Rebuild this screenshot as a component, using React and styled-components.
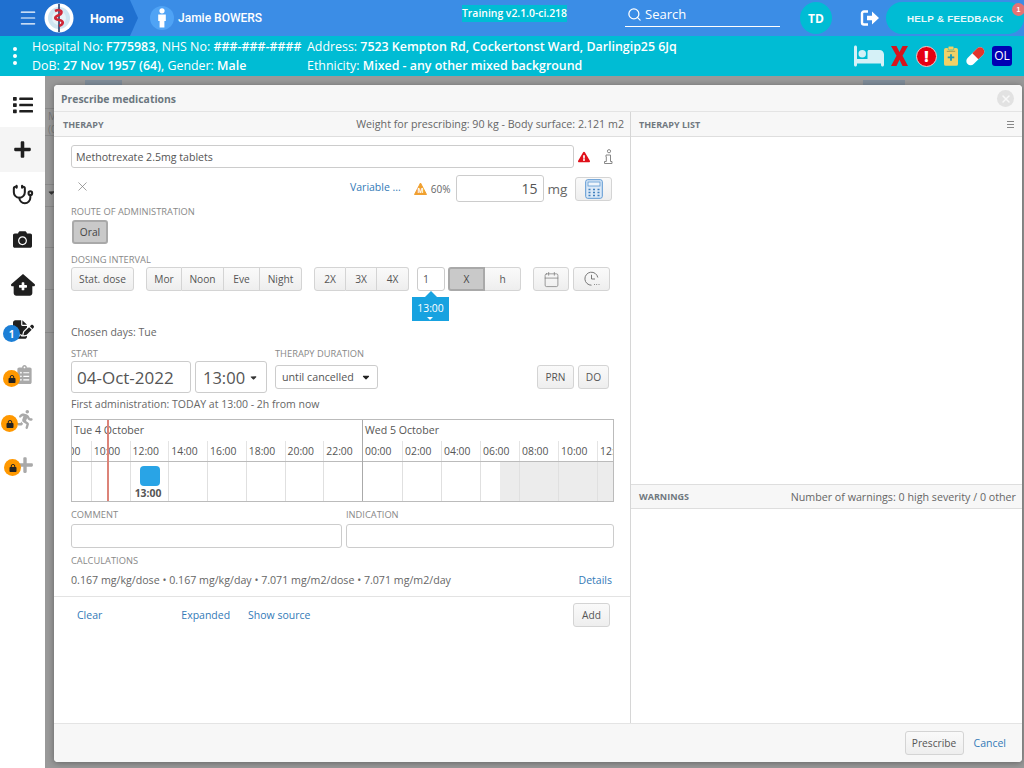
import React from 'react';
import styled, { createGlobalStyle } from 'styled-components';
import { FaPersonRunning, FaLock, FaBed, FaCaretDown, FaHouseMedical, FaFileSignature } from 'react-icons/fa6';
import { FaClipboardList, FaExclamationTriangle, FaList, FaPlus, FaCamera } from 'react-icons/fa';
import { Stethoscope, Search as SearchIcon, X as XIcon, Calendar, Menu } from 'lucide-react';

const Global = createGlobalStyle`
  html, body { margin: 0; padding: 0; background: #fff; }
  * { box-sizing: border-box; }
  body { font-family: "Open Sans", "Liberation Sans", sans-serif; color: #555; }
`;

const Page = styled.div`
  width: 1024px; height: 768px; overflow: hidden; display: flex; flex-direction: column;
`;
const Header = styled.header`
  height: 36px; background: #3b8de6; display: flex; align-items: center; color: #fff;
  font-family: Roboto, "Liberation Sans", sans-serif; flex: none;
`;
const HomeCrumb = styled.div`
  width: 138px; height: 36px; background: #1f70d0; display: flex; align-items: center;
  clip-path: polygon(0 0, 130px 0, 138px 18px, 130px 36px, 0 36px); flex: none; padding-left: 18px;
`;
const HomeText = styled.span`
  font-size: 12.5px; font-weight: 700; margin-left: 16px;
`;
const Logo = styled.svg`
  width: 30px; height: 30px; margin-left: 6px; flex: none;
`;
const PersonCircle = styled.div`
  width: 24px; height: 24px; border-radius: 50%; background: #4fa3f5; margin-left: 12px;
  display: flex; align-items: center; justify-content: center; flex: none;
`;
const PersonName = styled.span`
  font-size: 12px; font-weight: 500; margin-left: 4px; width: 262px; flex: none;
`;
const TrainingBadge = styled.div`
  width: 105px; height: 17px; background: #00bcd4; font-size: 10.4px; font-family: "Open Sans", sans-serif; font-weight: 600;
  line-height: 17px; text-align: center; margin-top: -9px; margin-left: 22px; flex: none; white-space: nowrap;
`;
const SearchBox = styled.div`
  width: 155px; height: 24px; margin-left: 58px; margin-top: -6px; border-bottom: 1px solid #fff; display: flex; align-items: center;
  gap: 3px; padding-bottom: 1px; font-size: 13px; flex: none; font-family: "Open Sans", sans-serif; padding-left: 2px;
`;
const UserCircle = styled.div`
  width: 32px; height: 32px; border-radius: 50%; background: #00bcd4; font-size: 12px; font-weight: 700; margin-left: 20px;
  display: flex; align-items: center; justify-content: center; flex: none; font-family: "Open Sans", sans-serif;
`;
const LogoutWrap = styled.div`
  margin-left: 28px; display: flex; flex: none;
`;
const HelpPill = styled.div`
  position: relative; width: 138px; height: 32px; border-radius: 16px; background: #00bcd4; margin-left: 6px; flex: none;
  font-size: 9.8px; font-weight: 700; font-family: "Liberation Sans", sans-serif; letter-spacing: .25px; color: #e6f8fb;
  display: flex; align-items: center; padding-left: 21px;
`;
const HelpBadge = styled.span`
  position: absolute; top: 1px; right: -1px; width: 13px; height: 13px; border-radius: 50%; background: #e57373;
  font-size: 7px; line-height: 13px; text-align: center; color: #fff;
`;

const PatientBar = styled.div`
  height: 40px; background: #00bcd4; color: #fff; display: flex; align-items: center; flex: none;
  font-size: 12.4px; line-height: 19px; position: relative; font-family: "Open Sans", sans-serif;
`;
const Dots = styled.div`
  width: 32px; display: flex; flex-direction: column; align-items: center; gap: 3px; flex: none; padding-right: 3px;
  & > i { width: 4px; height: 4px; border-radius: 50%; background: #fff; }
`;
const PatientCol = styled.div`
  width: ${p => p.$w}px; flex: none; white-space: nowrap;
  & b { font-weight: 600; }
`;
const AlertIcons = styled.div`
  display: flex; align-items: center; margin-left: auto; height: 30px; flex: none; padding-right: 12px;
`;
const AlertSlot = styled.div`
  margin-left: ${p => p.$ml}px; display: flex; align-items: center; justify-content: center; flex: none;
`;
const RedCircle = styled.div`
  width: 21px; height: 21px; border-radius: 50%; background: #e60012; border: 1px solid #f6c9c9; color: #fff;
  font-weight: 800; font-size: 15px; line-height: 18px; text-align: center;
`;
const OlBox = styled.div`
  width: 20px; height: 20px; border-radius: 3px; background: #0000b3; color: #fff; font-size: 12px; line-height: 20px; text-align: center;
`;

const Main = styled.div`
  flex: 1; display: flex; min-height: 0;
`;
const Sidebar = styled.nav`
  width: 45px; background: #fff; flex: none; padding-top: 6px; display: flex; flex-direction: column;
`;
const SideItem = styled.div`
  position: relative; height: 45px; display: flex; align-items: center; justify-content: center;
  background: ${p => p.$active ? '#f5f5f5' : 'transparent'};
  color: ${p => p.$off ? '#a9a9a9' : '#1f1f1f'}; padding-left: ${p => p.$pl || 0}px;
`;
const SideBadge = styled.span`
  position: absolute; left: ${p => p.$x}px; top: ${p => p.$y}px; width: 17px; height: 17px; border-radius: 50%;
  background: ${p => p.$blue ? '#1c7fd6' : '#ff9800'}; color: ${p => p.$blue ? '#fff' : '#222'};
  display: flex; align-items: center; justify-content: center; font-size: 10px; font-weight: 700;
`;

const Backdrop = styled.div`
  flex: 1; position: relative; background: #999; padding: 9px 2px 6px 9px; display: flex; min-width: 0;
`;
const GhostLine = styled.i`
  position: absolute; left: 0; width: 12px; top: ${p => p.$y}px; height: 1px; background: #888;
`;
const GhostTab = styled.i`
  position: absolute; left: ${p => p.$x}px; top: 4px; width: ${p => p.$w}px; height: 6px; background: #7f8c99;
`;
const GhostText = styled.span`
  position: absolute; left: 3px; top: ${p => p.$y}px; font-size: 10px; color: #777;
`;
const GhostCaret = styled.span`
  position: absolute; left: 2px; top: 112px; display: flex; color: #333;
`;
const Dialog = styled.section`
  position: relative; flex: 1; background: #fff; border-radius: 4px; display: flex; flex-direction: column;
  box-shadow: 0 1px 6px rgba(0,0,0,.35); overflow: hidden; min-width: 0;
`;
const TitleBar = styled.div`
  height: 27px; background: #f7f7f7; border-bottom: 1px solid #e4e4e4; display: flex; align-items: center; justify-content: space-between;
  padding: 1px 8px 0 7px; font-size: 10.4px; font-weight: 700; color: #6c7780; flex: none;
`;
const CloseDot = styled.div`
  width: 17px; height: 17px; border-radius: 50%; background: #e2e2e2; color: #f8f8f8; display: flex; align-items: center; justify-content: center;
`;
const Panes = styled.div`
  flex: 1; display: flex; min-height: 0;
`;
const LeftPane = styled.div`
  width: 577px; border-right: 1px solid #d6d6d6; flex: none; display: flex; flex-direction: column;
`;
const RightPane = styled.div`
  flex: 1; display: flex; flex-direction: column; min-width: 0;
`;
const PaneHead = styled.div`
  height: 25px; background: #f7f7f7; border-bottom: 1px solid #dedede; display: flex; align-items: center; justify-content: space-between;
  padding: 0 ${p => p.$pr || 6}px 0 ${p => p.$pl || 9}px; font-size: 10.7px; color: #666; flex: none;
  & > b { font-size: 9px; font-weight: 700; color: #70787f; }
`;
const ListSpace = styled.div`
  height: 347px; flex: none;
`;
const Burger = styled.div`
  width: 7px; height: 7px; border-top: 1px solid #888; border-bottom: 1px solid #888; position: relative;
  &::after { content: ''; position: absolute; left: 0; right: 0; top: 2px; height: 1px; background: #888; }
`;
const Body = styled.div`
  padding: 8px 16px 0 17px; flex: none; height: 459px;
`;
const Row = styled.div`
  display: flex; align-items: center; height: ${p => p.$h}px; margin-top: ${p => p.$mt || 0}px; position: relative;
`;
const FieldBox = styled.div`
  height: ${p => p.$h || 23}px; width: ${p => p.$w}px; background: #fff; border: 1px solid #ccc; border-radius: 3px; flex: none;
  font-size: ${p => p.$fs || 10.5}px; color: #555; display: flex; align-items: center; padding: 0 ${p => p.$px || 5}px;
  justify-content: ${p => p.$end ? 'flex-end' : 'flex-start'}; margin-left: ${p => p.$ml || 0}px; white-space: nowrap;
`;
const Caption = styled.div`
  font-size: 9.3px; line-height: 12px; color: #888; text-transform: uppercase; height: 12px; white-space: nowrap;
  margin-top: ${p => p.$mt || 0}px; margin-left: ${p => p.$ml || 0}px; width: ${p => p.$w ? p.$w + 'px' : 'auto'}; flex: none;
`;
const TextLink = styled.a`
  color: #337ab7; font-size: 10.5px; white-space: nowrap; margin-left: ${p => p.$auto ? 'auto' : (p.$ml || 0) + 'px'};
  margin-right: ${p => p.$mr || 0}px; margin-bottom: ${p => p.$mb || 0}px; flex: none;
`;
const Small = styled.span`
  font-size: ${p => p.$fs || 10.5}px; color: #666; white-space: nowrap; margin-left: ${p => p.$ml || 0}px;
  margin-bottom: ${p => p.$mb || 0}px; flex: none; display: inline-flex; align-items: center;
`;
const Btn = styled.div`
  height: ${p => p.$h || 24}px; width: ${p => p.$w}px; margin-left: ${p => p.$auto ? 'auto' : (p.$ml || 0) + 'px'}; flex: none; font-size: 10.2px; color: #555;
  display: flex; align-items: center; justify-content: center; border: 1px solid #d4d4d4; border-radius: 3px;
  background: linear-gradient(#fafafa, #eeeeee); white-space: nowrap;
`;
const PressedBtn = styled(Btn)`
  background: #c9c9c9; border: 2px solid #a9a9a9; border-radius: 3px; color: #444;
`;
const Group = styled.div`
  display: flex; margin-left: ${p => p.$ml || 0}px; flex: none;
  & > * { border-radius: 0; }
  & > * + * { border-left: none; }
  & > *:first-child { border-radius: 3px 0 0 3px; }
  & > *:last-child { border-radius: 0 3px 3px 0; }
`;
const Tip = styled.div`
  position: absolute; left: 341px; top: 30px; width: 37px; height: 24px; background: #17a2e0; color: #fff; font-size: 10.4px;
  text-align: center; line-height: 22px;
  &::before { content: ''; position: absolute; left: 13px; top: -6px; border: 6px solid transparent; border-top: 0; border-bottom-color: #17a2e0; }
  &::after { content: ''; position: absolute; left: 15px; bottom: 1px; border: 3px solid transparent; border-bottom: 0; border-top-color: #fff; }
`;
const Timeline = styled.div`
  position: relative; height: 83px; width: 543px; margin-top: 7px; border: 1px solid #bbb; overflow: hidden; background: #fff;
`;
const Track = styled.div`
  display: flex; width: 900px; height: 100%; margin-left: -20px;
`;
const Day = styled.div`
  flex: none; width: ${p => p.$w}px; display: flex; flex-direction: column; border-right: ${p => p.$end ? 'none' : '1px solid #aaa'};
`;
const DayTitle = styled.div`
  height: 21px; font-size: 10.6px; line-height: 20px; color: #555; padding-left: ${p => p.$pl}px; white-space: nowrap;
`;
const Hours = styled.div`
  height: 21px; display: flex; border-bottom: 1px solid #bbb;
`;
const Hour = styled.div`
  flex: 0 1 39px; min-width: 0; font-size: 10.4px; line-height: 20px; color: #555; padding-left: 2px;
  border-left: ${p => p.$first ? 'none' : '1px solid #e4e4e4'}; white-space: nowrap; overflow: hidden;
`;
const Slots = styled.div`
  flex: 1; display: flex;
`;
const Slot = styled.div`
  flex: 0 1 39px; min-width: 0; border-left: ${p => p.$first ? 'none' : '1px solid #e0e0e0'}; position: relative; background: ${p => p.$shade ? '#ececec' : '#fff'};
`;
const Half = styled.i`
  position: absolute; right: 0; top: 0; bottom: 0; width: 50%; background: #ececec;
`;
const Dose = styled.div`
  position: absolute; left: 9px; top: 4px; width: 20px; height: 20px; border-radius: 4px; background: #29a4e6;
`;
const DoseTime = styled.b`
  position: absolute; left: -2px; width: 39px; top: 24px; text-align: center; font-size: 10.4px; font-weight: 700; color: #555;
`;
const NowLine = styled.i`
  position: absolute; left: 35px; top: 0; bottom: 0; width: 2px; background: #dc8378;
`;
const ActionRow = styled.div`
  height: 37px; border-top: 1px solid #e3e3e3; margin: 8px -16px 0 -17px; padding: 0 20px 0 23px; display: flex; align-items: center; width: 576px;
`;
const Footer = styled.div`
  height: 39px; flex: none; background: #f7f7f7; border-top: 1px solid #e4e4e4; display: flex; align-items: center; justify-content: flex-end; padding-right: 16px;
`;
const WarnHead = styled(PaneHead)`
  border-top: 1px solid #dedede; height: 25px;
`;

const LogoArt = () => (
  <Logo viewBox="0 0 30 30">
    <circle cx="15" cy="15" r="14.5" fill="#fff" />
    <circle cx="15" cy="15" r="11" fill="#cfe6f2" />
    <circle cx="15" cy="15" r="7" fill="#e8f3f8" />
    <path d="M15 1v28" stroke="#27406b" strokeWidth="1.6" />
    <path d="M11 8c6-3 9 2 4 4s-5 4 0 5 5 4 0 6" stroke="#d02838" strokeWidth="2.6" fill="none" />
  </Logo>
);
const Person = () => (
  <svg width="10" height="20" viewBox="0 0 10 20" fill="#fff"><circle cx="5" cy="2.8" r="2.6" /><path d="M1.2 6.5h7.6v6.5H7.4v6.5H2.6V13H1.2z" /></svg>
);
const LogoutGlyph = () => (
  <svg width="20" height="20" viewBox="0 0 20 20"><path d="M8 3.500H4a2 2 0 0 0-2 2v9a2 2 0 0 0 2 2h4" fill="none" stroke="#fff" strokeWidth="2.400" /><path d="M7 7.700h5V3.500l7 6.500-7 6.500v-4.200H7z" fill="#fff" /></svg>
);
const BigX = () => (
  <svg width="17" height="20" viewBox="0 0 17 20"><path d="M0 0h5.5l3 6 3-6H17l-5.500 9.800L17 20h-5.500l-3-6.300-3 6.300H0l5.500-10.200z" fill="#d6141c" /></svg>
);
const Clipboard = () => (
  <svg width="14" height="22" viewBox="0 0 15 22"><rect x="0" y="2.5" width="15" height="19" rx="2" fill="#f2d166" /><rect x="4.5" y="0.5" width="6" height="4" rx="1" fill="#f2d166" stroke="#00bcd4" strokeWidth=".6" /><path d="M3 6h9" stroke="#8a8a50" strokeWidth=".8" /><path d="M7.5 9v7M4 12.5h7" stroke="#1e9bb8" strokeWidth="2" /></svg>
);
const Pill = () => (
  <svg width="20" height="20" viewBox="0 0 21 21"><g transform="rotate(-45 10.5 10.5)"><rect x="-1" y="6.5" width="23" height="9" rx="4.5" fill="#fff" /><path d="M10.5 6.5h7a4.5 4.500 0 0 1 0 9h-7z" fill="#e2342c" /></g></svg>
);
const WarnM = () => (
  <svg width="13" height="13" viewBox="0 0 13 13"><path d="M6.5 1 12.500 12.500H.5z" fill="#f0a030" stroke="#f0a030" strokeLinejoin="round" /><text x="6.5" y="11" fontSize="6.5" fontFamily="Open Sans" fontWeight="700" textAnchor="middle" fill="#fff">M</text></svg>
);
const InfoGlyph = () => (
  <svg width="10" height="16" viewBox="0 0 10 16" fill="none" stroke="#888" strokeWidth="1"><circle cx="6" cy="2.200" r="1.600" /><path d="M3 6h4.500v6.500h1.500v2H1.500v-2h1.800V8H3z" /></svg>
);
const Calc = () => (
  <svg width="18" height="20" viewBox="0 0 18 20" fill="none"><rect x=".7" y=".7" width="16.600" height="18.600" rx="2" fill="#dbe9f7" stroke="#5b97d2" /><rect x="3" y="3" width="12" height="4" fill="#eef5fb" stroke="#5b97d2" strokeWidth=".8" /><path d="M3.500 10.500h2m2.500 0h2m2.500 0h2M3.500 13.500h2m2.500 0h2m2.500 0h2M3.500 16.500h2m2.500 0h2m2.500 0h2" stroke="#3f7fbd" strokeWidth="1.300" /></svg>
);
const ClockDots = () => (
  <svg width="16" height="16" viewBox="0 0 16 16" fill="none" stroke="#777" strokeWidth="1"><path d="M13.800 6.500A6.500 6.500 0 1 0 7.500 14.200" /><path d="M7.500 3.800v4.200h3.500" /><path d="M10 13.500h.8m1.500 0h.8m1.500 0h.8" strokeWidth="1.200" /></svg>
);

const firstHours = ['08:00','10:00','12:00','14:00','16:00','18:00','20:00','22:00'];
const secondHours = ['00:00','02:00','04:00','06:00','08:00','10:00','12:00'];

export default function App() {
  return (
    <Page>
      <Global />
      <Header>
        <HomeCrumb>
          <Menu size={20} strokeWidth={1.4} color="#fff" />
          <LogoArt />
          <HomeText>Home</HomeText>
        </HomeCrumb>
        <PersonCircle><Person /></PersonCircle>
        <PersonName>Jamie BOWERS</PersonName>
        <TrainingBadge>Training v2.1.0-ci.218</TrainingBadge>
        <SearchBox><SearchIcon size={15} strokeWidth={2} color="#fff" />Search</SearchBox>
        <UserCircle>TD</UserCircle>
        <LogoutWrap><LogoutGlyph /></LogoutWrap>
        <HelpPill>HELP &amp; FEEDBACK<HelpBadge>1</HelpBadge></HelpPill>
      </Header>
      <PatientBar>
        <Dots><i /><i /><i /></Dots>
        <PatientCol $w={275}>
          Hospital No: <b>F775983</b>, NHS No: <b>###-###-####</b><br />
          DoB: <b>27 Nov 1957 (64)</b>, Gender: <b>Male</b>
        </PatientCol>
        <PatientCol $w={400}>
          Address: <b>7523 Kempton Rd, Cockertonst Ward, Darlingip25 6Jq</b><br />
          Ethnicity: <b>Mixed - any other mixed background</b>
        </PatientCol>
        <AlertIcons>
          <AlertSlot $ml={0}><FaBed size={30} color="#d5f1f7" /></AlertSlot>
          <AlertSlot $ml={7}><BigX /></AlertSlot>
          <AlertSlot $ml={8}><RedCircle>!</RedCircle></AlertSlot>
          <AlertSlot $ml={7}><Clipboard /></AlertSlot>
          <AlertSlot $ml={7}><Pill /></AlertSlot>
          <AlertSlot $ml={7}><OlBox>OL</OlBox></AlertSlot>
        </AlertIcons>
      </PatientBar>
      <Main>
        <Sidebar>
          <SideItem><FaList size={20} /></SideItem>
          <SideItem $active><FaPlus size={19} /></SideItem>
          <SideItem><Stethoscope size={22} strokeWidth={2.2} /></SideItem>
          <SideItem><FaCamera size={19} /></SideItem>
          <SideItem><FaHouseMedical size={24} /></SideItem>
          <SideItem $pl={2}><FaFileSignature size={21} /><SideBadge $blue $x={3} $y={18}>1</SideBadge></SideItem>
          <SideItem $off $pl={4}><FaClipboardList size={19} /><SideBadge $x={3} $y={18}><FaLock size={8} /></SideBadge></SideItem>
          <SideItem $off $pl={6}><FaPersonRunning size={19} /><SideBadge $x={1} $y={18}><FaLock size={8} /></SideBadge></SideItem>
          <SideItem $off $pl={4}><FaPlus size={18} /><SideBadge $x={4} $y={17}><FaLock size={8} /></SideBadge></SideItem>
        </Sidebar>
        <Backdrop>
          <GhostTab $x={40} $w={37} />
          <GhostTab $x={818} $w={42} />
          <GhostText $y={33}>M</GhostText>
          <GhostText $y={46}>(0</GhostText>
          <GhostCaret><FaCaretDown size={9} /></GhostCaret>
          <GhostLine $y={32} /><GhostLine $y={59} /><GhostLine $y={108} /><GhostLine $y={130} /><GhostLine $y={171} /><GhostLine $y={213} /><GhostLine $y={256} />
          <Dialog>
            <TitleBar>
              Prescribe medications
              <CloseDot><XIcon size={12} strokeWidth={3} /></CloseDot>
            </TitleBar>
            <Panes>
              <LeftPane>
                <PaneHead>
                  <b>THERAPY</b>
                  <span>Weight for prescribing: 90 kg - Body surface: 2.121 m2</span>
                </PaneHead>
                <Body>
                  <Row $h={23}>
                    <FieldBox $w={503} $fs={10.6} $px={4}>Methotrexate 2.5mg tablets</FieldBox>
                    <Small $ml={4}><FaExclamationTriangle size={12} color="#e0101a" /></Small>
                    <Small $ml={13}><InfoGlyph /></Small>
                  </Row>
                  <Row $h={27} $mt={7}>
                    <Small $ml={4} $mb={4}><XIcon size={15} strokeWidth={1.1} color="#777" /></Small>
                    <TextLink $ml={260} $mb={4}>Variable ...</TextLink>
                    <Small $ml={13}><WarnM /></Small>
                    <Small $ml={4} $fs={10}>60%</Small>
                    <FieldBox $w={88} $h={27} $fs={14} $ml={5} $end>15</FieldBox>
                    <Small $ml={4} $fs={13.5}>mg</Small>
                    <Btn $w={37} $ml={8}><Calc /></Btn>
                  </Row>
                  <Caption $mt={4}>Route of administration</Caption>
                  <Row $h={24} $mt={2}>
                    <PressedBtn $w={36} $ml={1}>Oral</PressedBtn>
                  </Row>
                  <Caption $mt={10}>Dosing interval</Caption>
                  <Row $h={24} $mt={1}>
                    <Btn $w={63}>Stat. dose</Btn>
                    <Group $ml={12}>
                      <Btn $w={36}>Mor</Btn><Btn $w={42}>Noon</Btn><Btn $w={36}>Eve</Btn><Btn $w={42}>Night</Btn>
                    </Group>
                    <Group $ml={12}>
                      <Btn $w={32}>2X</Btn><Btn $w={31}>3X</Btn><Btn $w={32}>4X</Btn>
                    </Group>
                    <FieldBox $w={28} $h={24} $ml={8}>1</FieldBox>
                    <Group $ml={3}>
                      <PressedBtn $w={37}>X</PressedBtn><Btn $w={36}>h</Btn>
                    </Group>
                    <Btn $w={36} $ml={12}><Calendar size={17} strokeWidth={1} color="#777" /></Btn>
                    <Btn $w={37} $ml={4}><ClockDots /></Btn>
                    <Tip>13:00</Tip>
                  </Row>
                  <Row $h={16} $mt={33}><Small>Chosen days: Tue</Small></Row>
                  <Row $h={12} $mt={8}>
                    <Caption $w={204}>Start</Caption>
                    <Caption>Therapy duration</Caption>
                  </Row>
                  <Row $h={32} $mt={1}>
                    <FieldBox $w={120} $h={32} $fs={17}>04-Oct-2022</FieldBox>
                    <FieldBox $w={72} $h={32} $fs={16.5} $ml={4} $px={7}>
                      13:00<Small $ml={4}><FaCaretDown size={9} color="#333" /></Small>
                    </FieldBox>
                    <FieldBox $w={103} $h={24} $ml={8} $fs={10.7} $px={6}>
                      until cancelled<Small $ml={7}><FaCaretDown size={10} color="#222" /></Small>
                    </FieldBox>
                    <Btn $w={37} $h={24} $ml={159}>PRN</Btn>
                    <Btn $w={31} $h={24} $ml={4}>DO</Btn>
                  </Row>
                  <Row $h={16} $mt={3}><Small>First administration: TODAY at 13:00 - 2h from now</Small></Row>
                  <Timeline>
                    <Track>
                      <Day $w={311}>
                        <DayTitle $pl={22}>Tue 4 October</DayTitle>
                        <Hours>{firstHours.map((h, i) => <Hour key={i} $first={i === 0}>{h}</Hour>)}</Hours>
                        <Slots>
                          {firstHours.map((h, i) => (
                            <Slot key={i} $first={i === 0}>
                              {h === '12:00' && <Dose />}
                              {h === '12:00' && <DoseTime>13:00</DoseTime>}
                            </Slot>
                          ))}
                        </Slots>
                      </Day>
                      <Day $w={300} $end>
                        <DayTitle $pl={2}>Wed 5 October</DayTitle>
                        <Hours>{secondHours.map((h, i) => <Hour key={i} $first={i === 0}>{h}</Hour>)}</Hours>
                        <Slots>
                          {secondHours.map((h, i) => (
                            <Slot key={i} $first={i === 0} $shade={i > 3}>{i === 3 && <Half />}</Slot>
                          ))}
                        </Slots>
                      </Day>
                    </Track>
                    <NowLine />
                  </Timeline>
                  <Row $h={12} $mt={7}>
                    <Caption $w={275}>Comment</Caption>
                    <Caption>Indication</Caption>
                  </Row>
                  <Row $h={24} $mt={3}>
                    <FieldBox $w={271} $h={24} />
                    <FieldBox $w={268} $h={24} $ml={4} />
                  </Row>
                  <Caption $mt={7}>Calculations</Caption>
                  <Row $h={16} $mt={5}>
                    <Small $fs={10.65}>0.167 mg/kg/dose • 0.167 mg/kg/day • 7.071 mg/m2/dose • 7.071 mg/m2/day</Small>
                    <TextLink $auto $mr={2}>Details</TextLink>
                  </Row>
                  <ActionRow>
                    <TextLink>Clear</TextLink>
                    <TextLink $ml={79}>Expanded</TextLink>
                    <TextLink $ml={18}>Show source</TextLink>
                    <Btn $w={37} $auto>Add</Btn>
                  </ActionRow>
                </Body>
              </LeftPane>
              <RightPane>
                <PaneHead $pl={8} $pr={8}>
                  <b>THERAPY LIST</b>
                  <Burger />
                </PaneHead>
                <ListSpace />
                <WarnHead $pl={8} $pr={6}>
                  <b>WARNINGS</b>
                  <span>Number of warnings: 0 high severity / 0 other</span>
                </WarnHead>
              </RightPane>
            </Panes>
            <Footer>
              <Btn $w={59}>Prescribe</Btn>
              <TextLink $ml={10}>Cancel</TextLink>
            </Footer>
          </Dialog>
        </Backdrop>
      </Main>
    </Page>
  );
}
